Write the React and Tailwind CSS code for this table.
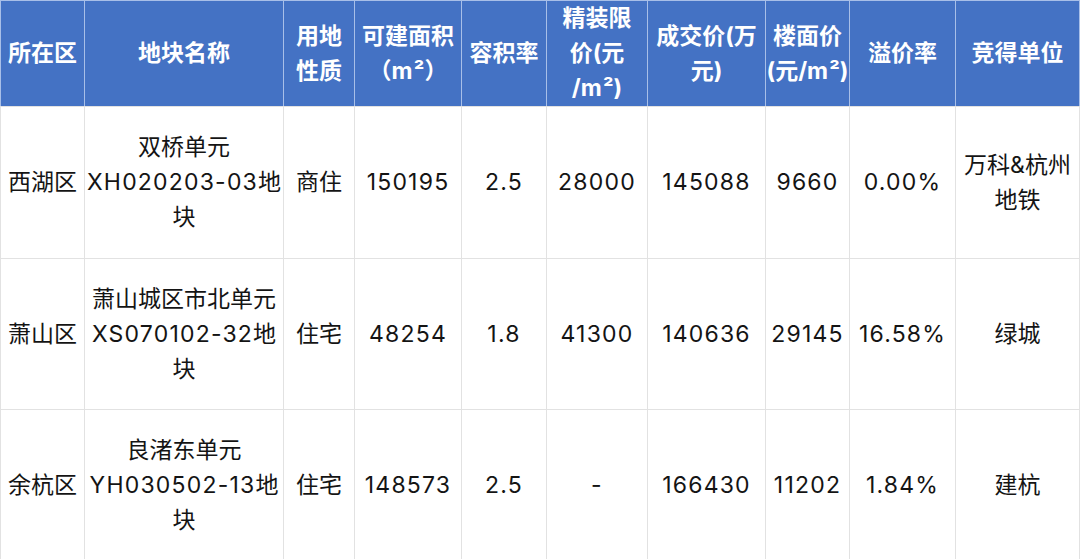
import React from "react";

const cols = [84, 199, 71, 107, 85, 101, 118, 84, 106, 124];

const headers = [
  ["所在区"],
  ["地块名称"],
  ["用地", "性质"],
  ["可建面积", "（m²）"],
  ["容积率"],
  ["精装限", "价(元", "/m²)"],
  ["成交价(万", "元)"],
  ["楼面价", "(元/m²)"],
  ["溢价率"],
  ["竞得单位"],
];

const rows = [
  [["西湖区"], ["双桥单元", "XH020203-03地", "块"], ["商住"], ["150195"], ["2.5"], ["28000"], ["145088"], ["9660"], ["0.00%"], ["万科&杭州", "地铁"]],
  [["萧山区"], ["萧山城区市北单元", "XS070102-32地", "块"], ["住宅"], ["48254"], ["1.8"], ["41300"], ["140636"], ["29145"], ["16.58%"], ["绿城"]],
  [["余杭区"], ["良渚东单元", "YH030502-13地", "块"], ["住宅"], ["148573"], ["2.5"], ["-"], ["166430"], ["11202"], ["1.84%"], ["建杭"]],
];

// split latin runs so they can get a little extra tracking
const Runs = ({ text }) =>
  text.split(/([A-Za-z0-9.%\-]+)/).map((part, i) =>
    /^[A-Za-z0-9.%\-]+$/.test(part) ? (
      <span key={i} className="tracking-[1.2px]">
        {part}
      </span>
    ) : (
      part
    )
  );

const Lines = ({ lines }) =>
  lines.map((l, i) => (
    <React.Fragment key={i}>
      {i > 0 && <br />}
      <Runs text={l} />
    </React.Fragment>
  ));

export default function App() {
  return (
    <div
      className="w-[1080px] h-[559px] bg-white overflow-hidden"
      style={{ fontFamily: '"Inter", "Noto Sans CJK SC", sans-serif' }}
    >
      <table className="border-collapse table-fixed w-[1079px] text-[23px] leading-[35px]">
        <colgroup>
          {cols.map((w, i) => (
            <col key={i} style={{ width: w }} />
          ))}
        </colgroup>
        <thead>
          <tr className="h-[104px] bg-[#4472c4]">
            {headers.map((h, i) => (
              <th
                key={i}
                className="border border-[#a8bfe8] border-b-[#e2e2e2] text-white font-bold text-center align-middle p-0 whitespace-nowrap"
              >
                <Lines lines={h} />
              </th>
            ))}
          </tr>
        </thead>
        <tbody>
          {rows.map((r, ri) => (
            <tr key={ri} className={ri === 0 ? "h-[152px]" : "h-[151px]"}>
              {r.map((c, ci) => (
                <td
                  key={ci}
                  className="border border-[#e2e2e2] text-[#141414] text-center align-middle p-0 whitespace-nowrap"
                >
                  <Lines lines={c} />
                </td>
              ))}
            </tr>
          ))}
        </tbody>
      </table>
    </div>
  );
}
